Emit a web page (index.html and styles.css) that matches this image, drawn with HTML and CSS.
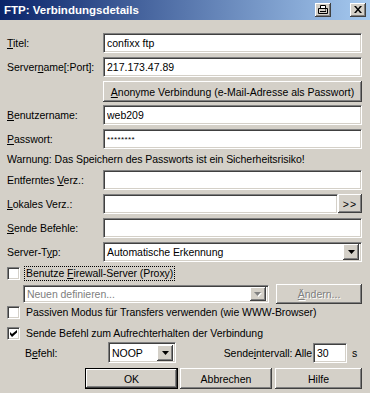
FILE: index.html
```html
<!DOCTYPE html>
<html lang="de">
<head>
    <meta charset="UTF-8">
    <meta name="viewport" content="width=device-width, initial-scale=1.0">
    <title>FTP: Verbindungsdetails</title>
    <link rel="stylesheet" href="styles.css">
</head>
<body>
<div class="window">
    <div class="titlebar">
        <span class="title">FTP: Verbindungsdetails</span>
        <div class="tb-buttons">
            <span class="tb-btn">
                <svg width="10" height="9" viewBox="0 0 10 9">
                    <path d="M2.5 0.5h5v3h-5z" fill="#fff" stroke="#000"/>
                    <path d="M0.5 3.5h9v5h-9z" fill="#d4d0c8" stroke="#000"/>
                    <path d="M2 6.5h6" stroke="#000"/>
                    <rect x="7" y="4.5" width="1" height="1" fill="#000"/>
                </svg>
            </span>
            <span class="tb-btn close">
                <svg width="8" height="7" viewBox="0 0 8 7">
                    <path d="M0 0h2l2 2.5l2-2.5h2l-3 3.5l3 3.5h-2l-2-2.5l-2 2.5h-2l3-3.5z" fill="#000"/>
                </svg>
            </span>
        </div>
    </div>

    <div class="content">
        <div class="form-grid">
            <label class="lbl"><u>T</u>itel:</label>
            <input class="field" type="text" value="confixx ftp">

            <label class="lbl">Server<u>n</u>ame[:Port]:</label>
            <input class="field" type="text" value="217.173.47.89">

            <span></span>
            <button class="btn anon"><u>A</u>nonyme Verbindung (e-Mail-Adresse als Passwort)</button>

            <label class="lbl"><u>B</u>enutzername:</label>
            <input class="field" type="text" value="web209">

            <label class="lbl"><u>P</u>asswort:</label>
            <div class="field pw">********</div>

            <p class="warning">Warnung: Das Speichern des Passworts ist ein Sicherheitsrisiko!</p>

            <label class="lbl">Entferntes <u>V</u>erz.:</label>
            <input class="field" type="text" value="">

            <label class="lbl"><u>L</u>okales Verz.:</label>
            <div class="field-row">
                <input class="field" type="text" value="">
                <button class="btn browse">&gt;&gt;</button>
            </div>

            <label class="lbl"><u>S</u>ende Befehle:</label>
            <input class="field" type="text" value="">

            <label class="lbl">Server-T<u>y</u>p:</label>
            <div class="field combo">
                <span class="combo-text">Automatische Erkennung</span>
                <span class="combo-btn">
                    <svg width="7" height="4" viewBox="0 0 7 4"><path d="M0 0h7l-3.5 4z" fill="#000"/></svg>
                </span>
            </div>
        </div>

        <div class="check-row first">
            <span class="check"></span>
            <span class="check-label focus">Benutze <u>F</u>irewall-Server (Proxy)</span>
        </div>

        <div class="proxy-row">
            <div class="field combo disabled">
                <span class="combo-text">Neuen definieren...</span>
                <span class="combo-btn">
                    <svg width="8" height="5" viewBox="0 0 8 5"><path d="M1 1h7l-3.5 4z" fill="#fff"/><path d="M0 0h7l-3.5 4z" fill="#808080"/></svg>
                </span>
            </div>
            <button class="btn change" disabled><u>Ä</u>ndern...</button>
        </div>

        <div class="check-row passive">
            <span class="check"></span>
            <span class="check-label">Passiven Modus für Transfers verwenden (wie WWW-Browser)</span>
        </div>

        <div class="check-row keep">
            <span class="check">
                <svg width="7" height="7" viewBox="0 0 7 7"><path d="M0 2l2 2l5-4v2.5l-5 4.5l-2-2.5z" fill="#000"/></svg>
            </span>
            <span class="check-label">Sende Befehl zum Aufrechterhalten der Verbindung</span>
        </div>

        <div class="keepalive-row">
            <label class="lbl small">B<u>e</u>fehl:</label>
            <div class="field combo noop">
                <span class="combo-text">NOOP</span>
                <span class="combo-btn">
                    <svg width="7" height="4" viewBox="0 0 7 4"><path d="M0 0h7l-3.5 4z" fill="#000"/></svg>
                </span>
            </div>
            <span class="interval-lbl">Sende<u>i</u>ntervall: Alle</span>
            <input class="field interval" type="text" value="30">
            <span class="unit">s</span>
        </div>

        <div class="dialog-buttons">
            <button class="btn default ok">OK</button>
            <button class="btn cancel">Abbrechen</button>
            <button class="btn help">Hilfe</button>
        </div>
    </div>
</div>
</body>
</html>
```

FILE: styles.css
```css
body {
    margin: 0;
    background: #d4d0c8;
    font-family: "Liberation Sans", Arial, sans-serif;
    font-size: 10.5px;
    letter-spacing: -0.05px;
    color: #000;
}
.window {
    width: 370px;
    height: 393px;
    overflow: hidden;
    background: #d4d0c8;
}
.titlebar {
    height: 20px;
    display: flex;
    align-items: center;
    justify-content: space-between;
    background: linear-gradient(to right, #0a246a, #a6caf0);
    padding: 0 4px 0 4px;
    box-sizing: border-box;
}
.title {
    color: #fff;
    font-weight: bold;
    font-size: 11.5px;
    letter-spacing: 0;
}
.tb-buttons {
    display: flex;
    gap: 19px;
}
.tb-btn {
    width: 16px;
    height: 14px;
    box-sizing: border-box;
    background: #d4d0c8;
    box-shadow: inset -1px -1px #404040, inset 1px 1px #fff, inset -2px -2px #808080;
    display: flex;
    align-items: center;
    justify-content: center;
    padding-bottom: 1px;
}
.content {
    padding: 13px 8px 0 7px;
}
.form-grid {
    display: grid;
    grid-template-columns: 96px 1fr;
    row-gap: 4px;
    align-items: center;
}
.lbl {
    display: block;
    white-space: nowrap;
}
.field {
    height: 20px;
    box-sizing: border-box;
    width: 100%;
    margin: 0;
    background: #fff;
    border: 1px solid;
    border-color: #808080 #fff #fff #808080;
    box-shadow: inset 1px 1px #404040, inset -1px -1px #d4d0c8;
    padding: 0 3px;
    font: inherit;
    color: #000;
    outline: none;
}
.pw {
    display: flex;
    align-items: center;
    font-size: 8px;
    letter-spacing: 0.4px;
}
.btn {
    font: inherit;
    color: #000;
    background: #d4d0c8;
    border: none;
    margin: 0;
    padding: 0;
    box-sizing: border-box;
    box-shadow: inset -1px -1px #404040, inset 1px 1px #fff, inset -2px -2px #808080;
}
.anon {
    height: 21px;
    width: 100%;
    margin-bottom: -1px;
}
.warning {
    grid-column: 1 / 3;
    margin: 0;
    height: 13px;
    line-height: 13px;
}
.field-row {
    display: flex;
}
.field-row .field {
    flex: 1;
}
.browse {
    width: 24px;
    height: 19px;
    letter-spacing: 1px;
}
.combo {
    display: flex;
    align-items: center;
    justify-content: space-between;
    padding: 2px 2px 2px 3px;
}
.combo-btn {
    width: 16px;
    height: 16px;
    box-sizing: border-box;
    background: #d4d0c8;
    box-shadow: inset -1px -1px #404040, inset 1px 1px #fff, inset -2px -2px #808080;
    display: flex;
    align-items: center;
    justify-content: center;
}
.combo.disabled .combo-btn {
    height: 14px;
}
.combo.disabled .combo-text {
    color: #808080;
}
.check-row {
    display: flex;
    align-items: center;
    height: 15px;
}
.check-row.first {
    margin-top: 4px;
}
.check-row.passive {
    margin-top: 1px;
}
.check-row.keep {
    margin-top: 6px;
}
.check {
    width: 13px;
    height: 13px;
    box-sizing: border-box;
    background: #fff;
    border: 1px solid;
    border-color: #808080 #fff #fff #808080;
    box-shadow: inset 1px 1px #404040, inset -1px -1px #d4d0c8;
    display: flex;
    align-items: center;
    justify-content: center;
    margin-right: 5px;
}
.check-label {
    padding: 0 1px;
    line-height: 13px;
}
.check-label.focus {
    outline: 1px dotted #000;
}
.proxy-row {
    display: flex;
    align-items: center;
    gap: 7px;
    height: 20px;
    margin: 3px 0 0 16px;
}
.proxy-row .combo {
    width: 246px;
    height: 18px;
}
.change {
    width: 86px;
    height: 20px;
    color: #808080;
    text-shadow: 1px 1px #fff;
}
.keepalive-row {
    display: flex;
    align-items: center;
    margin-top: 1px;
    height: 21px;
}
.lbl.small {
    width: 83px;
    padding-left: 18px;
}
.noop {
    width: 68px;
    height: 21px;
}
.interval-lbl {
    margin-left: auto;
    margin-right: 1px;
}
.interval {
    width: 34px;
    height: 20px;
}
.unit {
    width: 15px;
    text-align: center;
}
.dialog-buttons {
    display: flex;
    justify-content: flex-end;
    gap: 2px;
    margin-top: 5px;
}
.dialog-buttons .btn {
    height: 21px;
}
.ok {
    width: 93px;
}
.default {
    border: 1px solid #000;
}
.cancel {
    width: 92px;
}
.help {
    width: 87px;
    margin-left: 1px;
}
```
